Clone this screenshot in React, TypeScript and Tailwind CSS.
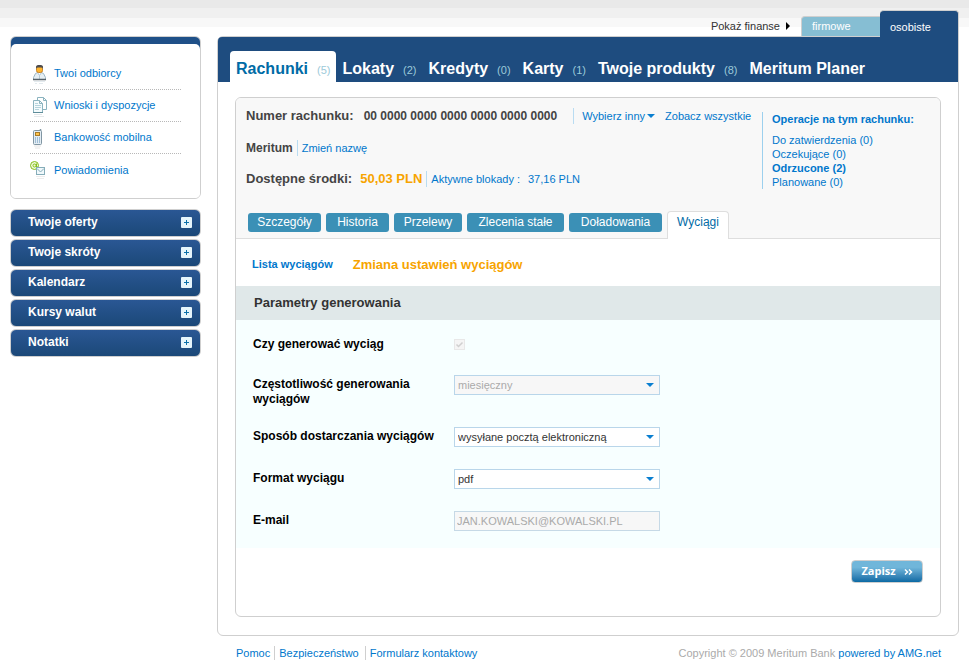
import type { ReactNode } from "react";

const BORDER = "border-[#cfcfcf]";

function RecipientIcon() {
  return (
    <svg width="20" height="22" viewBox="0 0 20 22" aria-hidden="true">
      <path d="M3.500 16.500 V14.500 L5.500 10.500 L7.500 9.500 H11.500 L13.500 10.500 L15.500 14.500 V16.500 Z" fill="#e6eff4" stroke="#9db7c6" />
      <path d="M7.500 9.500 L9.500 12.500 L11.500 9.500" fill="#fff" stroke="#9db7c6" strokeWidth="0.800" />
      <path d="M9.500 13 V16" stroke="#b4c8d3" />
      <rect x="6.500" y="3.500" width="6" height="6" rx="2" fill="#ffb52e" stroke="#c98428" />
      <path d="M6 6 V3.500 Q6.500 2 8 2 H11 Q12.500 2 13 3.500 V6 L12 4.500 H7 Z" fill="#4f4c4c" />
      <path d="M3 16.500 H16" stroke="#56616a" strokeWidth="1.500" />
      <path d="M4 18.500 H15 M5 20.500 H7 M9 20.500 H13" stroke="#e3eaee" />
    </svg>
  );
}

function DocumentsIcon() {
  return (
    <svg width="20" height="22" viewBox="0 0 20 22" aria-hidden="true">
      <path d="M7.500 2.500 H13.500 L16.500 5.500 V14.500 H7.500 Z" fill="#fff" stroke="#8bb3bf" />
      <path d="M13.500 2.500 V5.500 H16.500" fill="none" stroke="#8bb3bf" />
      <path d="M3.500 5.500 H9.500 L12.500 8.500 V17.500 H3.500 Z" fill="#f4fbfd" stroke="#8bb3bf" />
      <path d="M9.500 5.500 V8.500 H12.500" fill="none" stroke="#8bb3bf" />
      <path d="M5 8.500 H8 M5 10.500 H11 M5 12.500 H11 M5 14.500 H9" stroke="#b5d3dc" />
      <path d="M3 17.500 H13" stroke="#5e8c99" />
      <path d="M4 19.500 H12 M4 21.500 H14" stroke="#e4e8ea" />
    </svg>
  );
}

function PhoneIcon() {
  return (
    <svg width="20" height="22" viewBox="0 0 20 22" aria-hidden="true">
      <path d="M10.500 4 V2" stroke="#8196a3" strokeWidth="1.500" />
      <rect x="3.500" y="3.500" width="8" height="14" rx="1" fill="#e3edf4" stroke="#8196a3" />
      <rect x="5.500" y="5.500" width="4" height="3" fill="#ffc44a" stroke="#a77b2a" />
      <path d="M5 11 H10 M5 13 H10 M5 15 H10" stroke="#5f8fb8" strokeDasharray="1 1" />
      <path d="M4 19 H11 M5 21 H10" stroke="#e4e4e4" />
    </svg>
  );
}

function MailIcon() {
  return (
    <svg width="20" height="22" viewBox="0 0 20 22" aria-hidden="true">
      <circle cx="4.500" cy="6.500" r="4" fill="#effad6" stroke="#84bd1c" />
      <circle cx="4.500" cy="6.500" r="1.500" fill="none" stroke="#84bd1c" />
      <path d="M6.500 4.500 V8 H8" fill="none" stroke="#84bd1c" />
      <rect x="6.500" y="8.500" width="8" height="7" fill="#f0f8fb" stroke="#86adb9" />
      <path d="M7 9.500 L10.500 13 L14 9.500" fill="none" stroke="#86adb9" />
      <path d="M6 17.500 H15 M7 19.500 H14" stroke="#ececec" />
    </svg>
  );
}

const shortcuts: { label: string; icon: ReactNode }[] = [
  { label: "Twoi odbiorcy", icon: <RecipientIcon /> },
  { label: "Wnioski i dyspozycje", icon: <DocumentsIcon /> },
  { label: "Bankowość mobilna", icon: <PhoneIcon /> },
  { label: "Powiadomienia", icon: <MailIcon /> },
];

const panels = ["Twoje oferty", "Twoje skróty", "Kalendarz", "Kursy walut", "Notatki"];

function Sidebar() {
  return (
    <aside className="w-[191px] shrink-0 pt-9">
      <nav className={`overflow-hidden rounded-md border bg-[linear-gradient(#1f5088_14px,#fff_14px)] pt-[7px] ${BORDER}`}>
        <ul className="rounded-t-[5px] bg-white px-[19px] pt-3.5 pb-3">
          {shortcuts.map((s) => (
            <li
              key={s.label}
              className="h-8 border-b border-dotted border-[#b8b8b8] last:border-b-0"
            >
              <a href="#" className="flex h-full items-center gap-1 text-[#0077cc]">
                {s.icon}
                <span>{s.label}</span>
              </a>
            </li>
          ))}
        </ul>
      </nav>
      <div className="mt-2.5 flex flex-col gap-0.5">
        {panels.map((p) => (
          <button
            key={p}
            type="button"
            className={`flex h-7 items-center justify-between rounded-md border bg-linear-to-b from-[#2a5794] to-[#1b4878] pr-2 pb-0.5 pl-[17px] text-xs font-bold text-white ${BORDER}`}
          >
            {p}
            <svg width="11" height="11" viewBox="0 0 11 11" aria-hidden="true">
              <rect width="11" height="11" rx="1" fill="#e6f5fb" />
              <path d="M3 5.500 H8 M5.500 3 V8" stroke="#0a6ea8" />
            </svg>
          </button>
        ))}
      </div>
    </aside>
  );
}

const sections = [
  { label: "Rachunki", count: 5, active: true },
  { label: "Lokaty", count: 2 },
  { label: "Kredyty", count: 0 },
  { label: "Karty", count: 1 },
  { label: "Twoje produkty", count: 8 },
  { label: "Meritum Planer" },
];

function SectionNav() {
  return (
    <nav className="flex h-[45px] items-end rounded-tl-[4px] bg-[#1e4c7f] pl-3">
      {sections.map((s) => (
        <a
          key={s.label}
          href="#"
          className={`flex h-[31px] items-center gap-[9px] px-1.5 pt-1 text-base font-bold whitespace-nowrap ${
            s.active ? "rounded-t-[4px] bg-white text-[#006ba6]" : "text-white"
          }`}
        >
          {s.label}
          {s.count !== undefined && (
            <span className="pt-1 text-[11px] font-normal text-[#9ccad9]">({s.count})</span>
          )}
        </a>
      ))}
    </nav>
  );
}

function Divider() {
  return <span className="h-4 w-px bg-[#b9dcf2]" />;
}

function AccountSummary() {
  return (
    <div className="flex items-start justify-between pr-5 pl-2.5">
      <div className="flex-1 pt-2.5 text-[13px] font-bold whitespace-nowrap text-[#444]">
        <div className="flex h-4 items-center">
          <span>Numer rachunku:</span>
          <span className="ml-2.5 text-xs">00 0000 0000 0000 0000 0000 0000</span>
          <span className="mr-2 ml-4 flex"><Divider /></span>
          <a href="#" className="flex items-center gap-0.5 text-[11px] font-normal text-[#0077cc]">
            Wybierz inny
            <svg width="8" height="4" viewBox="0 0 8 4" aria-hidden="true">
              <path d="M0 0 H8 L4 4 Z" fill="#0a7fd0" />
            </svg>
          </a>
          <a href="#" className="ml-2.5 text-[11px] font-normal text-[#0077cc]">Zobacz wszystkie</a>
        </div>
        <div className="mt-4 flex h-4 items-center gap-1">
          <span className="text-xs">Meritum</span>
          <Divider />
          <a href="#" className="text-[11px] font-normal text-[#0077cc]">Zmień nazwę</a>
        </div>
        <div className="mt-[15px] flex h-4 items-center">
          <span>Dostępne środki:</span>
          <span className="ml-2 text-[#f7a400]">50,03 PLN</span>
          <span className="mx-1 flex"><Divider /></span>
          <a href="#" className="flex gap-2 text-[11px] font-normal text-[#0077cc]">
            <span>Aktywne blokady :</span>
            <span>37,16 PLN</span>
          </a>
        </div>
      </div>
      <div className="mt-3.5 h-[77px] w-[158px] border-l border-[#9cd0ee] pl-[9px] leading-[14px] text-[#0077cc]">
        <h2 className="mb-[7px] font-bold">Operacje na tym rachunku:</h2>
        <ul>
          <li><a href="#">Do zatwierdzenia (0)</a></li>
          <li><a href="#">Oczekujące (0)</a></li>
          <li><a href="#" className="font-bold">Odrzucone (2)</a></li>
          <li><a href="#">Planowane (0)</a></li>
        </ul>
      </div>
    </div>
  );
}

const tabs = [
  { label: "Szczegóły", width: "w-[73px]" },
  { label: "Historia", width: "w-[63px]" },
  { label: "Przelewy", width: "w-[68px]" },
  { label: "Zlecenia stałe", width: "w-[97px]" },
  { label: "Doładowania", width: "w-[93px]" },
];

function AccountTabs() {
  return (
    <div className="mt-[22px] flex h-7 items-start gap-[5px] border-b border-[#dedede] pl-3 text-xs">
      {tabs.map((t) => (
        <a
          key={t.label}
          href="#"
          className={`mt-0.5 flex h-[19px] items-center justify-center rounded-[3px] bg-[#3b90b6] pb-px text-white ${t.width}`}
        >
          {t.label}
        </a>
      ))}
      <a
        href="#"
        className="-mb-px flex h-7 w-[62px] items-start justify-center rounded-t-[4px] border border-b-0 border-[#dedede] bg-white pt-0.5 text-[#006ba6]"
      >
        Wyciągi
      </a>
    </div>
  );
}

function SelectField({ id, value, disabled = false }: { id: string; value: string; disabled?: boolean }) {
  return (
    <div className="relative">
      <select
        id={id}
        disabled={disabled}
        className="block h-5 w-[206px] appearance-none border border-[#b9d6ea] bg-white pl-[3px] text-[11px] text-[#333] opacity-100 disabled:bg-[#f7f7f7] disabled:text-[#aaa]"
      >
        <option>{value}</option>
      </select>
      <svg
        className="pointer-events-none absolute top-2 right-1.5"
        width="8"
        height="4"
        viewBox="0 0 8 4"
        aria-hidden="true"
      >
        <path d="M0 0 H8 L4 4 Z" fill="#0a7fd0" />
      </svg>
    </div>
  );
}

function Field({ id, label, children }: { id: string; label: string; children: ReactNode }) {
  return (
    <div className="flex items-start">
      <label htmlFor={id} className="w-[201px] pt-0.5 pr-4 text-xs leading-[15px] font-bold text-black">
        {label}
      </label>
      {children}
    </div>
  );
}

function StatementForm() {
  return (
    <form>
      <h3 className="flex h-[34px] items-center bg-[#e0e8e9] pl-[18px] text-[13px] font-bold text-[#333]">
        Parametry generowania
      </h3>
      <div className="flex flex-col gap-[22px] bg-[#f7ffff] pt-[15px] pb-[17px] pl-[17px]">
        <Field id="generate" label="Czy generować wyciąg">
          <div className="relative mt-1 mb-[3px] flex">
            <input
              id="generate"
              type="checkbox"
              defaultChecked
              disabled
              className="size-[11px] appearance-none border border-[#e8e8e8] bg-[#f5f5f5]"
            />
            <svg className="pointer-events-none absolute top-0 left-0" width="11" height="11" viewBox="0 0 11 11" aria-hidden="true">
              <path d="M2.500 5.500 L4.500 7.500 L8.500 3.500" fill="none" stroke="#d0d0d0" strokeWidth="1.500" />
            </svg>
          </div>
        </Field>
        <Field id="frequency" label="Częstotliwość generowania wyciągów">
          <SelectField id="frequency" value="miesięczny" disabled />
        </Field>
        <div className="-mt-0.5">
          <Field id="delivery" label="Sposób dostarczania wyciągów">
            <SelectField id="delivery" value="wysyłane pocztą elektroniczną" />
          </Field>
        </div>
        <Field id="format" label="Format wyciągu">
          <SelectField id="format" value="pdf" />
        </Field>
        <Field id="email" label="E-mail">
          <input
            id="email"
            type="text"
            disabled
            defaultValue="JAN.KOWALSKI@KOWALSKI.PL"
            className="h-5 w-[206px] border border-[#c6d9e6] bg-[#f7f7f7] pl-0.5 text-[11px] text-[#aaa]"
          />
        </Field>
      </div>
      <div className="flex justify-end pt-3 pr-[17px] pb-[33px]">
        <button
          type="submit"
          className={`flex h-[23px] w-[72px] items-center justify-center gap-2 rounded-[4px] border bg-linear-to-b from-[#70b6da] from-30% to-[#076aa4] font-['Open_Sans',sans-serif] text-[11px] font-bold text-white ${BORDER}`}
        >
          Zapisz
          <svg width="9" height="6" viewBox="0 0 9 6" aria-hidden="true">
            <path d="M1 0.500 L3.500 3 L1 5.500 M5 0.500 L7.500 3 L5 5.500" fill="none" stroke="#fff" strokeWidth="1.500" />
          </svg>
        </button>
      </div>
    </form>
  );
}

function ProfileSwitch() {
  return (
    <div className="flex h-9 items-end justify-end">
      <span className="flex h-5 items-center gap-1.5 pr-[11px] text-[#333]">
        Pokaż finanse
        <svg width="4" height="8" viewBox="0 0 4 8" aria-hidden="true">
          <path d="M0 0 L4 4 L0 8 Z" fill="#000" />
        </svg>
      </span>
      <a href="#" className={`flex h-5 w-[79px] items-center rounded-tl-[4px] border-t border-l bg-[#86bed3] pl-2.5 text-white ${BORDER}`}>
        firmowe
      </a>
      <a href="#" className={`-mb-px flex h-[27px] w-[79px] items-center rounded-t-[4px] border-t border-r bg-[#1e4c7f] pt-1.5 pl-2.5 text-white ${BORDER}`}>
        osobiste
      </a>
    </div>
  );
}

function Footer() {
  return (
    <footer className="flex items-center justify-between pt-2.5 pr-[18px] pl-[19px] leading-[14px]">
      <nav className="flex divide-x divide-[#cfcfcf] text-[#0077cc]">
        <a href="#" className="pr-1">Pomoc</a>
        <a href="#" className="pr-1.5 pl-1">Bezpieczeństwo</a>
        <a href="#" className="pl-1">Formularz kontaktowy</a>
      </nav>
      <p className="text-[#aaa]">
        Copyright © 2009 Meritum Bank <a href="#" className="text-[#0077cc]">powered by AMG.net</a>
      </p>
    </footer>
  );
}

export default function App() {
  return (
    <div className="flex min-h-screen gap-4 bg-white bg-[linear-gradient(#e9e9e9_8px,#f0f0f0_8px,#f0f0f0_18px,#f8f8f8_18px,#f8f8f8_27px,#fff_27px)] px-2.5 font-['Liberation_Sans',Arial,sans-serif] text-[11px]">
      <Sidebar />
      <div className="min-w-0 flex-1">
        <ProfileSwitch />
        <main className={`rounded-md rounded-tr-none border bg-white ${BORDER}`}>
          <SectionNav />
          <div className={`mx-[17px] mt-[15px] mb-[18px] overflow-hidden rounded-md border ${BORDER}`}>
            <div className="bg-[#f8f8f8]">
              <AccountSummary />
              <AccountTabs />
            </div>
            <div className="flex h-[47px] items-center gap-5 pt-1 pl-4">
              <a href="#" className="font-bold text-[#0077cc]">Lista wyciągów</a>
              <h2 className="text-[13px] font-bold text-[#f7a400]">Zmiana ustawień wyciągów</h2>
            </div>
            <StatementForm />
          </div>
        </main>
        <Footer />
      </div>
    </div>
  );
}
